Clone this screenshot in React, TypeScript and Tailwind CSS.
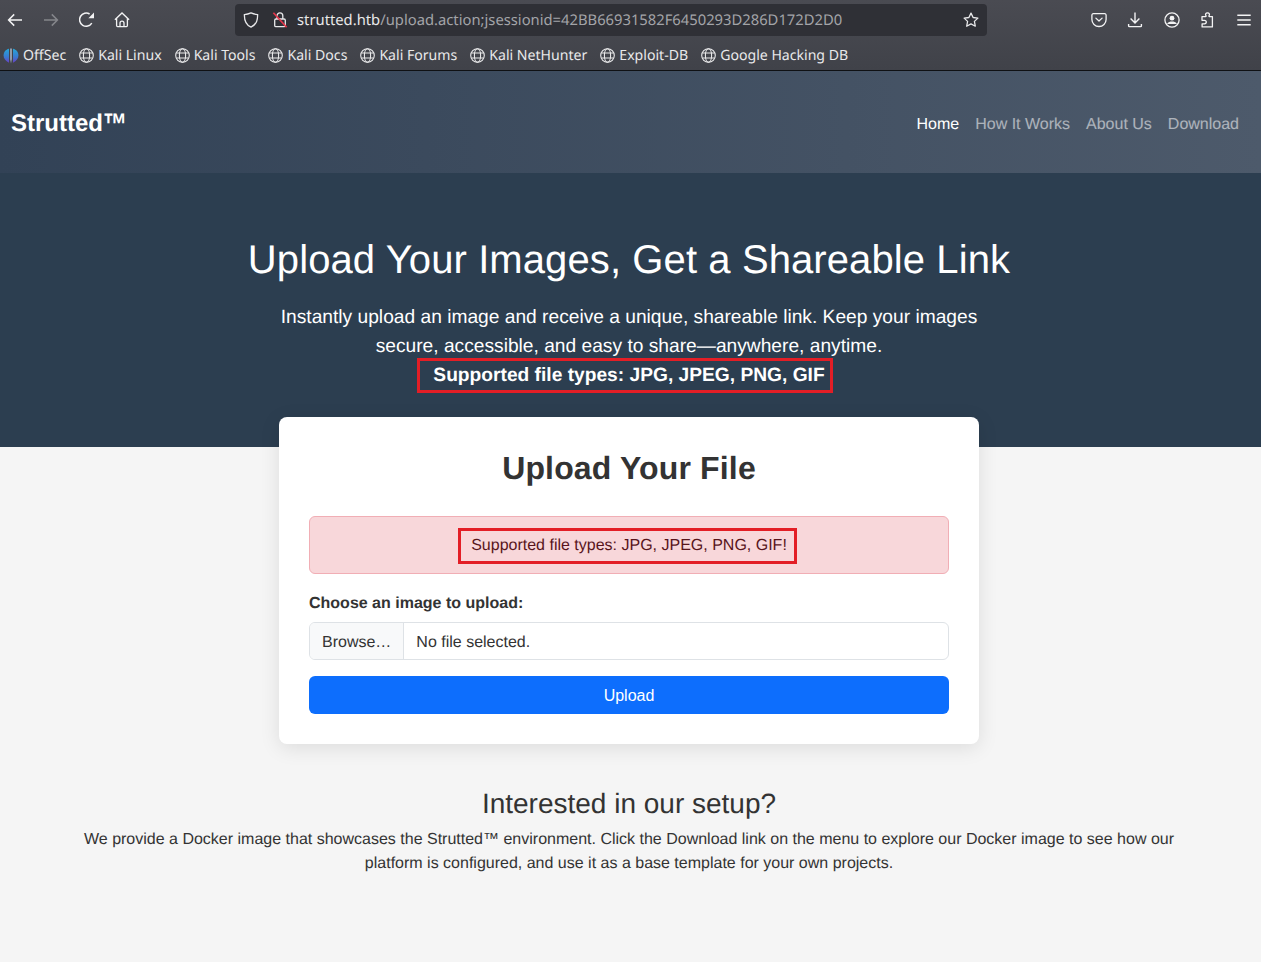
const bookmarks = ['Kali Linux', 'Kali Tools', 'Kali Docs', 'Kali Forums', 'Kali NetHunter', 'Exploit-DB', 'Google Hacking DB'];

// firefox chrome icons, drawn on a 16px box
function Icon({ children, className = 'text-[#f3f3f4]' }: { children: React.ReactNode; className?: string }) {
  return (
    <svg width="16" height="16" viewBox="0 0 16 16" fill="none" stroke="currentColor" strokeWidth="1.3" className={`shrink-0 ${className}`}>
      {children}
    </svg>
  );
}

function BackArrow() {
  return <Icon><path d="M15 8H1.6M7.2 2.4 1.6 8l5.6 5.6" strokeWidth="1.5" /></Icon>;
}

function ForwardArrow() {
  return <Icon className="text-[#85868b]"><path d="M1 8h13.4M8.8 2.4 14.4 8l-5.6 5.6" strokeWidth="1.5" /></Icon>;
}

function Reload() {
  return (
    <Icon>
      <path d="M12.8 11.2A6.6 6.6 0 1 1 10.6 2" strokeWidth="1.5" />
      <path d="M15 .6v5.6H9.4z" fill="currentColor" stroke="none" />
    </Icon>
  );
}

function Home() {
  return (
    <Icon>
      <path d="M.9 7.8 8 1l7.1 6.8M2.6 6.4v7.2a1 1 0 0 0 1 1h8.8a1 1 0 0 0 1-1V6.4" />
      <path d="M6 14.6v-3.4a2 2 0 0 1 4 0v3.4" />
    </Icon>
  );
}

function ShieldIcon() {
  return (
    <Icon className="text-[#e8e8ea]">
      <path d="M8 .9c2 .9 4.3 1.5 6.6 1.7.2 5.8-1.6 10.3-6.6 12.5C3 12.9 1.2 8.4 1.4 2.6 3.7 2.4 6 1.8 8 .9z" />
    </Icon>
  );
}

function InsecureLock() {
  return (
    <Icon className="text-[#e8e8ea]">
      <path d="M5 7V3.8a2.9 2.9 0 0 1 5.8 0V7" />
      <rect x="2.7" y="7" width="10.6" height="7.7" rx="1.3" />
      <path d="M1.4 .8 14.6 15.2" stroke="#e5354a" strokeWidth="1.7" />
    </Icon>
  );
}

function StarIcon() {
  return (
    <Icon className="text-[#e8e8ea]">
      <path d="M8 1.1 10.1 5.5 14.9 6.1 11.4 9.4 12.3 14.2 8 11.9 3.7 14.2 4.6 9.4 1.1 6.1 5.9 5.5z" strokeLinejoin="round" />
    </Icon>
  );
}

function Pocket() {
  return (
    <Icon>
      <path d="M2.3 1.7h11.4a1.4 1.4 0 0 1 1.4 1.4v4.3a7.1 7.1 0 0 1-14.2 0V3.1a1.4 1.4 0 0 1 1.4-1.4z" />
      <path d="M4.9 6.1 8 9l3.1-2.9" strokeLinecap="round" strokeLinejoin="round" />
    </Icon>
  );
}

function DownloadIcon() {
  return (
    <Icon>
      <path d="M8 .4v10.4M3.6 6.5 8 10.9l4.4-4.4" strokeWidth="1.4" />
      <path d="M1.6 12v1.8a.8.8 0 0 0 .8.8h11.2a.8.8 0 0 0 .8-.8V12" strokeWidth="1.4" />
    </Icon>
  );
}

function Account() {
  return (
    <Icon>
      <circle cx="8" cy="8" r="7.1" />
      <circle cx="8" cy="6.2" r="2.4" fill="currentColor" stroke="none" />
      <path d="M3.3 11.4c1-1.3 2.7-1.9 4.7-1.9s3.7.6 4.7 1.900v.6H3.300z" fill="currentColor" stroke="none" />
    </Icon>
  );
}

function PuzzleIcon() {
  return (
    <Icon>
      <path d="M2 4.6h3.6c.5 0 .6-.4.3-.9-.8-1.2-.2-2.9 1.6-2.9s2.400 1.700 1.600 2.900c-.3.500-.2.900.3.900h3v10.300H2.100v-3.100h2.300c1.300 0 1.900-1 1.900-1.800S5.700 8.300 4.400 8.300H2z" strokeLinejoin="round" />
    </Icon>
  );
}

function MenuIcon() {
  return <Icon><path d="M1.3 3.2h13.4M1.3 8h13.4M1.3 12.8h13.4" strokeWidth="1.4" /></Icon>;
}

function GlobeIcon() {
  return (
    <svg width="15" height="15" viewBox="0 0 15 15" fill="none" stroke="#e9e9ea" strokeWidth="1.1" className="shrink-0">
      <circle cx="7.5" cy="7.5" r="6.8" />
      <ellipse cx="7.5" cy="7.5" rx="3.1" ry="6.8" />
      <path d="M1.4 5h12.2M1.4 10h12.2" />
    </svg>
  );
}

function OffSecLogo() {
  return (
    <svg width="16" height="16" viewBox="0 0 16 16" className="shrink-0">
      <defs>
        <linearGradient id="offsec" x1="0" y1="0" x2="0" y2="1">
          <stop offset="0" stopColor="#25a5d8" />
          <stop offset="0.6" stopColor="#3a78d0" />
          <stop offset="1" stopColor="#6a3fc6" />
        </linearGradient>
      </defs>
      <path d="M6 .8C2.7 1.5.6 4.2.6 7.4c0 3 1.9 5.5 5.4 7.4z" fill="url(#offsec)" />
      <path d="M10 .8c3.3.7 5.4 3.4 5.4 6.6 0 3-1.9 5.5-5.4 7.4z" fill="url(#offsec)" />
      <path d="M7.4.6h1.2v10.400L8 15.600l-.6-4.600z" fill="#c9d6ea" />
    </svg>
  );
}

export default function App() {
  return (
    <div className="min-h-[962px] bg-[#f5f5f5] font-['Liberation_Sans',Arial,sans-serif] text-[#333] [text-rendering:geometricPrecision]">
      <header className="h-[71px] border-b border-[#0f1114] bg-gradient-to-b from-[#4a4b52] to-[#404249] font-['Noto_Sans',sans-serif] text-[#e9e9ea]">
        <div className="flex h-[39px] items-center">
          <div className="flex w-[235px] items-center pl-[7px]">
            <BackArrow />
            <span className="ml-[20px]"><ForwardArrow /></span>
            <span className="ml-[20px]"><Reload /></span>
            <span className="ml-[19px]"><Home /></span>
          </div>
          <div className="flex h-[32px] w-[752px] items-center rounded-[4px] bg-[#2f3036] pl-[8px] pr-[8px]">
            <ShieldIcon />
            <span className="ml-[13px]"><InsecureLock /></span>
            <span className="ml-[9px] pt-[2px] text-[14.78px] leading-none whitespace-nowrap">
              strutted.htb<span className="text-[#a3a4a8]">/upload.action;jsessionid=42BB66931582F6450293D286D172D2D0</span>
            </span>
            <span className="ml-auto"><StarIcon /></span>
          </div>
          <div className="ml-[104px] flex items-center">
            <Pocket />
            <span className="ml-[20px]"><DownloadIcon /></span>
            <span className="ml-[21px]"><Account /></span>
            <span className="ml-[20px]"><PuzzleIcon /></span>
            <span className="ml-[20px]"><MenuIcon /></span>
          </div>
        </div>
        <div className="flex h-[31px] items-center gap-[13px] pl-[3px] pt-[2px] text-[14.1px] leading-none">
          <div className="flex items-center gap-[4px]">
            <OffSecLogo />
            <span className="pt-[2px]">OffSec</span>
          </div>
          {bookmarks.map((name) => (
            <div key={name} className="flex items-center gap-[4px]">
              <GlobeIcon />
              <span className="whitespace-nowrap pt-[2px]">{name}</span>
            </div>
          ))}
        </div>
      </header>

      <div className="h-[376px] bg-[#2c3e50] text-white">
        <nav className="flex h-[102px] items-center justify-between bg-gradient-to-r from-[#324256] to-[#4d5a6b] pl-[11px] pr-[14px]">
          <a className="pt-[3px] text-[24px] font-bold leading-[36px]">Strutted<span className="inline-block origin-[50%_30%] scale-y-[1.3]">™</span></a>
          <ul className="flex pt-[5px] text-[16px] leading-[24px]">
            <li className="px-[8px]">Home</li>
            <li className="px-[8px] text-white/55">How It Works</li>
            <li className="px-[8px] text-white/55">About Us</li>
            <li className="px-[8px] text-white/55">Download</li>
          </ul>
        </nav>
        <div className="pr-[3px] pt-[63px] text-center">
          <h1 className="text-[40px] font-normal leading-[48px] tracking-[0.1px]">Upload Your Images, Get a Shareable Link</h1>
          <p className="mx-auto mt-[19px] w-[720px] text-[19.2px] leading-[29px]">
            Instantly upload an image and receive a unique, shareable link. Keep your images secure, accessible, and easy to share—anywhere, anytime.
          </p>
          <p className="text-[19.2px] font-bold leading-[29px]">
            <span className="relative inline-block">
              Supported file types: JPG, JPEG, PNG, GIF
              <span className="absolute -bottom-[3px] -left-[16px] -right-[8px] -top-[3px] border-[3px] border-[#e31e26]" />
            </span>
          </p>
        </div>
      </div>

      <main className="pr-[3px]">
        <section className="relative mx-auto -mt-[30px] w-[700px] rounded-[8px] bg-white p-[30px] shadow-[0_4px_20px_rgba(0,0,0,0.1)]">
          <h2 className="text-center text-[32px] font-bold leading-[42px] tracking-[0.15px]">Upload Your File</h2>
          <div className="mt-[27px] flex justify-center rounded-[6px] border border-[#f1aeb5] bg-[#f8d7da] p-[16px] leading-[24px] text-[#58151c]">
            <span className="relative block h-[24px] pt-[1px]">
              Supported file types: JPG, JPEG, PNG, GIF!
              <span className="absolute -bottom-[7px] -left-[13px] -right-[10px] -top-[5px] border-[3px] border-[#e31e26]" />
            </span>
          </div>
          <label className="mt-[18px] block font-bold leading-[24px]">Choose an image to upload:</label>
          <div className="mt-[6px] flex h-[38px] items-center overflow-hidden rounded-[6px] border border-[#dee2e6] bg-white">
            <span className="flex h-full items-center border-r border-[#dee2e6] bg-[#f8f9fa] px-[12px] pt-[3px]">Browse…</span>
            <span className="ml-[12px] pt-[3px]">No file selected.</span>
          </div>
          <button className="mt-[16px] block h-[38px] w-full rounded-[6px] bg-[#0d6efd] pt-[2px] text-center text-white">Upload</button>
        </section>

        <section className="mx-auto mt-[43px] w-[1110px] text-center">
          <h3 className="text-[28px] font-normal leading-[34px]">Interested in our setup?</h3>
          <p className="mt-[7px] leading-[24px]">
            We provide a Docker image that showcases the Strutted™ environment. Click the Download link on the menu to explore our Docker image to see how our platform is configured, and use it as a base template for your own projects.
          </p>
        </section>
      </main>
    </div>
  );
}
